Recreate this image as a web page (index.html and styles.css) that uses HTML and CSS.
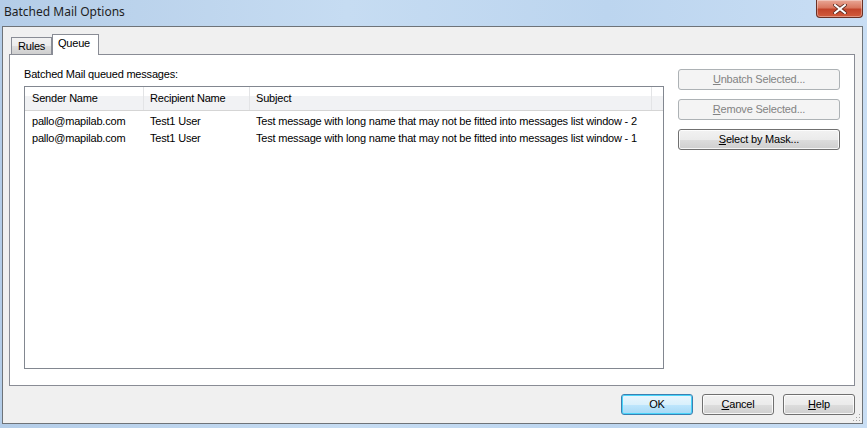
FILE: index.html
```html
<!DOCTYPE html>
<html>
<head>
<meta charset="utf-8">
<link rel="stylesheet" href="styles.css">
</head>
<body>
<div class="window">
  <div class="titlebar">
    <span class="title">Batched Mail Options</span>
    <div class="close"><svg width="14" height="10" viewBox="0 0 14 10"><path d="M2 1 L12 9 M12 1 L2 9" stroke="#5b2a20" stroke-width="3.6" stroke-linecap="square"/><path d="M2 1 L12 9 M12 1 L2 9" stroke="#ffffff" stroke-width="2" stroke-linecap="square"/></svg></div>
  </div>
  <div class="client">
    <div class="tabs">
      <div class="tab">Rules</div>
      <div class="tab active">Queue</div>
    </div>
    <div class="panel">
      <div class="leftcol">
        <div class="label">Batched Mail queued messages:</div>
        <div class="list">
          <div class="header">
            <div class="hcell c1">Sender Name</div>
            <div class="hcell c2">Recipient Name</div>
            <div class="hcell c3">Subject</div>
            <div class="hcell c4"></div>
          </div>
          <div class="rows">
            <div class="row"><div class="cell c1">pallo@mapilab.com</div><div class="cell c2">Test1 User</div><div class="cell c3">Test message with long name that may not be fitted into messages list window - 2</div></div>
            <div class="row"><div class="cell c1">pallo@mapilab.com</div><div class="cell c2">Test1 User</div><div class="cell c3">Test message with long name that may not be fitted into messages list window - 1</div></div>
          </div>
        </div>
      </div>
      <div class="rightcol">
        <div class="btn disabled wide"><u>U</u>nbatch Selected...</div>
        <div class="btn disabled wide"><u>R</u>emove Selected...</div>
        <div class="btn wide"><u>S</u>elect by Mask...</div>
      </div>
    </div>
    <div class="bottom">
      <div class="btn default small">OK</div>
      <div class="btn small"><u>C</u>ancel</div>
      <div class="btn small"><u>H</u>elp</div>
    </div>
    <svg class="grip" width="9" height="9" viewBox="0 0 9 9">
      <rect x="7" y="1" width="1" height="1" fill="#a0a0a0"/>
      <rect x="4" y="4" width="1" height="1" fill="#a0a0a0"/>
      <rect x="7" y="4" width="1" height="1" fill="#a0a0a0"/>
      <rect x="1" y="7" width="1" height="1" fill="#a0a0a0"/>
      <rect x="4" y="7" width="1" height="1" fill="#a0a0a0"/>
      <rect x="7" y="7" width="1" height="1" fill="#a0a0a0"/>
    </svg>
  </div>
</div>
</body>
</html>
```
FILE: styles.css
```css
* { box-sizing: border-box; }
html, body { margin: 0; padding: 0; }
body {
  width: 867px;
  height: 428px;
  overflow: hidden;
  font-family: "Liberation Sans", Arial, sans-serif;
  font-size: 11px;
  letter-spacing: -0.2px;
  color: #000;
}
.window {
  width: 867px;
  height: 428px;
  display: flex;
  flex-direction: column;
  background: linear-gradient(90deg, #b4cde8 0%, #c6dcf2 40%, #bcd5ef 70%, #c9def4 100%);
  padding: 0 4px 4px 2px;
}
.titlebar {
  height: 26px;
  display: flex;
  align-items: flex-start;
  justify-content: space-between;
  flex: none;
}
.title {
  font-family: "Noto Sans", "Open Sans", sans-serif;
  font-size: 12px;
  letter-spacing: 0;
  color: #1e1e1e;
  padding: 4px 0 0 2px;
  line-height: 16px;
}
.close {
  width: 47px;
  height: 18px;
  border: 1px solid #6a3024;
  border-top: none;
  border-radius: 0 0 4px 4px;
  background: linear-gradient(180deg, #e9a796 0%, #d9775f 45%, #c2442a 55%, #d25c3c 100%);
  display: flex;
  align-items: center;
  justify-content: center;
  box-shadow: inset 0 0 0 1px rgba(255,255,255,0.35);
}
.client {
  position: relative;
  flex: 1;
  background: #f0f0f0;
  border: 1px solid #6e7378;
  display: flex;
  flex-direction: column;
  padding: 7px 7px 8px 6px;
}
.tabs {
  display: flex;
  align-items: flex-end;
  padding-left: 2px;
  height: 20px;
  flex: none;
  position: relative;
  z-index: 2;
}
.tab {
  height: 17px;
  width: 41px;
  border: 1px solid #898c95;
  border-bottom: none;
  background: linear-gradient(180deg, #f2f2f2 0%, #ebebeb 50%, #dddddd 51%, #cfcfcf 100%);
  padding: 2px 0 0 6px;
  line-height: 13px;
}
.tab.active {
  height: 21px;
  width: 47px;
  background: #fff;
  margin-bottom: -1px;
  padding: 2px 0 0 5px;
}
.panel {
  flex: 1;
  background: #fff;
  border: 1px solid #898c95;
  display: flex;
  padding: 12px 14px 16px 14px;
  gap: 14px;
}
.leftcol {
  flex: 1;
  display: flex;
  flex-direction: column;
}
.label {
  line-height: 14px;
  height: 14px;
  margin-bottom: 5px;
}
.list {
  flex: 1;
  border: 1px solid #828790;
  display: flex;
  flex-direction: column;
}
.header {
  display: flex;
  height: 24px;
  border-bottom: 1px solid #d5d5d5;
  background: linear-gradient(180deg, #ffffff 0%, #ffffff 40%, #f1f2f4 41%, #f1f2f4 100%);
  flex: none;
}
.hcell {
  height: 23px;
  line-height: 23px;
  border-right: 1px solid #e3e4e6;
  padding-left: 6px;
  white-space: nowrap;
}
.c1 { width: 119px; padding-left: 7px; }
.c2 { width: 106px; }
.c3 { width: 402px; }
.c4 { flex: 1; border-right: none; }
.rows { padding-top: 2px; }
.row {
  display: flex;
  height: 17px;
  line-height: 17px;
}
.cell {
  white-space: nowrap;
  padding-left: 6px;
}
.row .c1 { padding-left: 7px; }
.rightcol {
  display: flex;
  flex-direction: column;
  gap: 9px;
  padding-top: 2px;
}
.btn {
  height: 21px;
  line-height: 19px;
  border: 1px solid #707070;
  border-radius: 3px;
  background: linear-gradient(180deg, #f2f2f2 0%, #ebebeb 50%, #dddddd 51%, #cfcfcf 100%);
  box-shadow: inset 0 0 0 1px rgba(255,255,255,0.8);
  text-align: center;
  color: #000;
}
.btn.wide { width: 162px; }
.btn.disabled {
  background: #f4f4f4;
  border-color: #adb2b5;
  color: #838383;
  box-shadow: none;
}
.btn.default {
  border-color: #3c7fb1;
  background: linear-gradient(180deg, #eaf6fd 0%, #d9f0fc 50%, #bee6fd 51%, #a7d9f5 100%);
  box-shadow: inset 0 0 0 1px #48d4fa;
}
.bottom {
  display: flex;
  justify-content: flex-end;
  gap: 9px;
  padding-top: 8px;
  flex: none;
}
.btn.small { width: 72px; }
.grip {
  position: absolute;
  right: 1px;
  bottom: 1px;
}
```
